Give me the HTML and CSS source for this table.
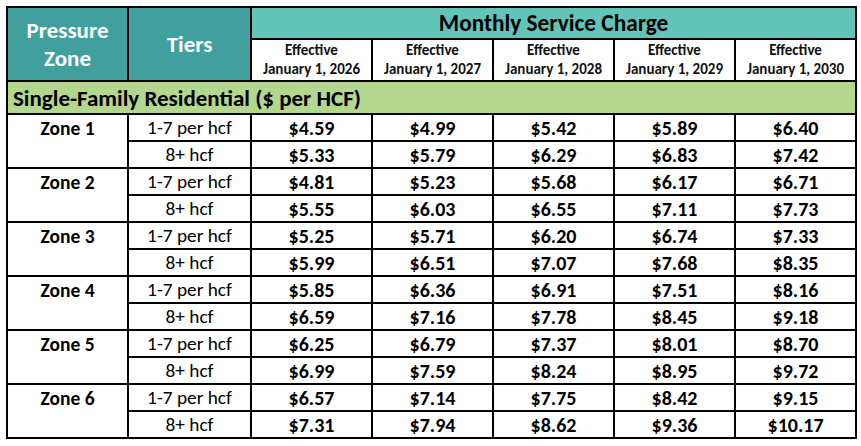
FILE: index.html
```html
<!DOCTYPE html>
<html>
<head>
<meta charset="utf-8">
<link rel="stylesheet" href="styles.css">
</head>
<body>
<table class="rates">
  <colgroup>
    <col class="c-zone"><col class="c-tier"><col class="c-val"><col class="c-val"><col class="c-val"><col class="c-val"><col class="c-val">
  </colgroup>
  <thead>
    <tr class="h1">
      <th class="dark" rowspan="2">Pressure<br>Zone</th>
      <th class="dark" rowspan="2">Tiers</th>
      <th class="light" colspan="5">Monthly Service Charge</th>
    </tr>
    <tr class="h2">
      <th class="eff">Effective<br>January 1, 2026</th>
      <th class="eff">Effective<br>January 1, 2027</th>
      <th class="eff">Effective<br>January 1, 2028</th>
      <th class="eff">Effective<br>January 1, 2029</th>
      <th class="eff">Effective<br>January 1, 2030</th>
    </tr>
    <tr class="sec">
      <th colspan="7">Single-Family Residential ($ per HCF)</th>
    </tr>
  </thead>
  <tbody>
    <tr class="first"><td class="zone">Zone 1</td><td class="tier">1-7 per hcf</td><td>$4.59</td><td>$4.99</td><td>$5.42</td><td>$5.89</td><td>$6.40</td></tr>
    <tr class="second"><td class="zone"></td><td class="tier">8+ hcf</td><td>$5.33</td><td>$5.79</td><td>$6.29</td><td>$6.83</td><td>$7.42</td></tr>
    <tr class="first"><td class="zone">Zone 2</td><td class="tier">1-7 per hcf</td><td>$4.81</td><td>$5.23</td><td>$5.68</td><td>$6.17</td><td>$6.71</td></tr>
    <tr class="second"><td class="zone"></td><td class="tier">8+ hcf</td><td>$5.55</td><td>$6.03</td><td>$6.55</td><td>$7.11</td><td>$7.73</td></tr>
    <tr class="first"><td class="zone">Zone 3</td><td class="tier">1-7 per hcf</td><td>$5.25</td><td>$5.71</td><td>$6.20</td><td>$6.74</td><td>$7.33</td></tr>
    <tr class="second"><td class="zone"></td><td class="tier">8+ hcf</td><td>$5.99</td><td>$6.51</td><td>$7.07</td><td>$7.68</td><td>$8.35</td></tr>
    <tr class="first"><td class="zone">Zone 4</td><td class="tier">1-7 per hcf</td><td>$5.85</td><td>$6.36</td><td>$6.91</td><td>$7.51</td><td>$8.16</td></tr>
    <tr class="second"><td class="zone"></td><td class="tier">8+ hcf</td><td>$6.59</td><td>$7.16</td><td>$7.78</td><td>$8.45</td><td>$9.18</td></tr>
    <tr class="first"><td class="zone">Zone 5</td><td class="tier">1-7 per hcf</td><td>$6.25</td><td>$6.79</td><td>$7.37</td><td>$8.01</td><td>$8.70</td></tr>
    <tr class="second"><td class="zone"></td><td class="tier">8+ hcf</td><td>$6.99</td><td>$7.59</td><td>$8.24</td><td>$8.95</td><td>$9.72</td></tr>
    <tr class="first"><td class="zone">Zone 6</td><td class="tier">1-7 per hcf</td><td>$6.57</td><td>$7.14</td><td>$7.75</td><td>$8.42</td><td>$9.15</td></tr>
    <tr class="second"><td class="zone"></td><td class="tier">8+ hcf</td><td>$7.31</td><td>$7.94</td><td>$8.62</td><td>$9.36</td><td>$10.17</td></tr>
  </tbody>
</table>
</body>
</html>
```
FILE: styles.css
```css
html, body {
  margin: 0;
  padding: 0;
  background: #ffffff;
}
body {
  font-family: Carlito, Lato, "Liberation Sans", sans-serif;
  color: #000;
}
.rates {
  margin: 6px 0 0 6px;
  border-collapse: collapse;
  table-layout: fixed;
  width: 851px;
  border: 2px solid #000;
}
.c-zone { width: 121px; }
.c-tier { width: 123px; }
.c-val { width: 121px; }

.rates th, .rates td {
  border: 2px solid #000;
  padding: 0;
  text-align: center;
  vertical-align: middle;
  white-space: nowrap;
}
.h1 { height: 32px; }
.h2 { height: 42px; }
.dark {
  background: #41a09d;
  color: #fff;
  font-weight: 700;
  font-size: 23px;
  line-height: 28px;
}
.light {
  background: #62c4b8;
  color: #000;
  font-weight: 700;
  font-size: 23.3px;
  line-height: 26px;
}
.eff {
  background: #fff;
  font-weight: 700;
  font-size: 15px;
  line-height: 19px;
  padding-top: 1px;
  color: #111;
}
.sec { height: 33px; }
.sec th {
  background: #b3d78d;
  text-align: left;
  padding-left: 5px;
  font-size: 23px;
  font-weight: 700;
  color: #000;
}
tbody tr { height: 27px; }
tbody td {
  font-size: 20px;
  font-weight: 700;
  line-height: 20px;
}
tbody td.tier {
  font-weight: 400;
  font-size: 19.3px;
}
tbody td.zone {
  font-size: 19.5px;
}
tbody tr.first td.zone,
tbody tr.second td.zone {
  border-bottom-width: 0;
  border-top-width: 0;
}
tbody tr.first td.zone { border-top: 2px solid #000; }
tbody tr.first td.tier { border-bottom-width: 1px; }
```
